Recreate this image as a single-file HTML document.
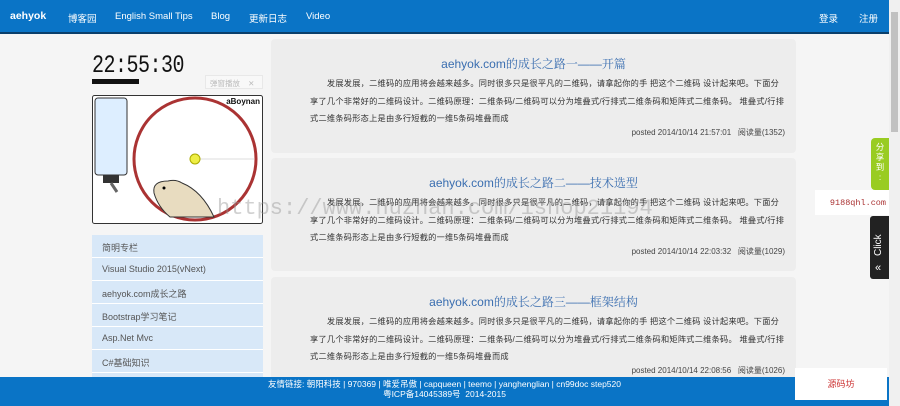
<!DOCTYPE html>
<html><head><meta charset="utf-8"><style>
*{margin:0;padding:0;box-sizing:border-box}
body{width:900px;height:406px;overflow:hidden;background:#f5f5f5;font-family:"Liberation Sans","Noto Sans CJK SC",sans-serif;position:relative}
.nav{position:absolute;left:0;top:0;width:889px;height:34px;background:#0a74c6;border-bottom:2px solid #0a3f6b;color:#fff;font-size:9.5px}
.nav span{position:absolute;top:11px}
.card{position:absolute;left:271px;width:525px;background:#ededed;border-radius:4px}
.card h3{position:absolute;top:16px;left:0;width:100%;text-align:center;font-weight:normal;font-size:12px;color:#3a6eb0;font-family:"Liberation Sans","Noto Serif CJK SC",serif}
.card p{position:absolute;left:39px;top:36px;width:490px;font-size:8.2px;letter-spacing:0.25px;line-height:17.6px;color:#333;white-space:nowrap}
.card .m{position:absolute;right:11px;top:88px;font-size:8px;color:#444}
.menu{position:absolute;left:92px;top:235px;width:171px}
.menu div{height:23px;background:#d8e8f8;border-bottom:1px solid #fff;color:#555;font-size:9px;padding:6px 0 0 10px}
.foot{position:absolute;left:0;top:377px;width:889px;height:29px;background:#0a74c6;color:#fff;font-size:8.5px;text-align:center;line-height:9.5px;padding-top:3px}
</style></head><body>
<div class="nav">
<span style="left:10px;font-weight:bold;font-size:10.5px;top:10px">aehyok</span>
<span style="left:68px">博客园</span>
<span style="left:115px">English Small Tips</span>
<span style="left:211px">Blog</span>
<span style="left:249px">更新日志</span>
<span style="left:306px">Video</span>
<span style="left:819px">登录</span>
<span style="left:859px">注册</span>
</div>
<div style="position:absolute;left:92px;top:52px;font-size:20px;font-family:'Liberation Mono',monospace;color:#111;transform:scaleY(1.25);transform-origin:0 0;letter-spacing:-0.5px">22:55:30</div>
<div style="position:absolute;left:92px;top:79px;width:47px;height:5px;background:#111"></div>
<div style="position:absolute;left:205px;top:75px;width:58px;height:14px;border:1px solid #e8e8e8;background:#f8f8f8;font-size:7.5px;color:#bbb;padding:2px 0 0 4px">弹窗播放 <span style="margin-left:6px">✕</span></div>
<svg style="position:absolute;left:92px;top:95px" width="171" height="129" viewBox="0 0 171 129">
<rect x="0.5" y="0.5" width="170" height="128" rx="2" fill="#fff" stroke="#333"/>
<rect x="3" y="3" width="32" height="77" rx="3" fill="#ddeeff" stroke="#333"/>
<rect x="11" y="80" width="16" height="8" fill="#333"/>
<line x1="19" y1="88" x2="25" y2="97" stroke="#666" stroke-width="3"/>
<circle cx="103" cy="64" r="61" fill="none" stroke="#a33" stroke-width="3"/>
<line x1="103" y1="64" x2="162" y2="64" stroke="#ddd"/>
<circle cx="103" cy="64" r="5" fill="#ee4" stroke="#aa0"/>
<path d="M62 98 Q60 86 76 86 Q84 84 90 88 Q110 96 122 122 L78 122 Q66 112 62 98Z" fill="#e8dcc0" stroke="#333"/>
<circle cx="72" cy="93" r="1.5" fill="#000"/>
<text x="168" y="9" text-anchor="end" font-size="8" font-weight="bold" fill="#111">aBoynan</text>
</svg>
<div class="menu">
<div>简明专栏</div><div>Visual Studio 2015(vNext)</div><div>aehyok.com成长之路</div><div>Bootstrap学习笔记</div><div>Asp.Net Mvc</div><div>C#基础知识</div><div></div>
</div>
<div class="card" style="top:39px;height:114px"><h3>aehyok.com的成长之路一——开篇</h3><p>&emsp;&emsp;发展发展，二维码的应用将会越来越多。同时很多只是很平凡的二维码，请拿起你的手 把这个二维码 设计起来吧。下面分<br>享了几个非常好的二维码设计。二维码原理：二维条码/二维码可以分为堆叠式/行排式二维条码和矩阵式二维条码。 堆叠式/行排<br>式二维条码形态上是由多行短截的一维5条码堆叠而成</p><div class="m">posted 2014/10/14 21:57:01 &nbsp; 阅读量(1352)</div></div>
<div class="card" style="top:158px;height:113px"><h3>aehyok.com的成长之路二——技术选型</h3><p>&emsp;&emsp;发展发展，二维码的应用将会越来越多。同时很多只是很平凡的二维码，请拿起你的手 把这个二维码 设计起来吧。下面分<br>享了几个非常好的二维码设计。二维码原理：二维条码/二维码可以分为堆叠式/行排式二维条码和矩阵式二维条码。 堆叠式/行排<br>式二维条码形态上是由多行短截的一维5条码堆叠而成</p><div class="m">posted 2014/10/14 22:03:32 &nbsp; 阅读量(1029)</div></div>
<div class="card" style="top:277px;height:110px"><h3>aehyok.com的成长之路三——框架结构</h3><p>&emsp;&emsp;发展发展，二维码的应用将会越来越多。同时很多只是很平凡的二维码，请拿起你的手 把这个二维码 设计起来吧。下面分<br>享了几个非常好的二维码设计。二维码原理：二维条码/二维码可以分为堆叠式/行排式二维条码和矩阵式二维条码。 堆叠式/行排<br>式二维条码形态上是由多行短截的一维5条码堆叠而成</p><div class="m">posted 2014/10/14 22:08:56 &nbsp; 阅读量(1026)</div></div>
<div style="position:absolute;left:217px;top:196px;font-size:22px;color:rgba(150,150,150,.45);font-family:'Liberation Mono',monospace;white-space:nowrap">https://www.huzhan.com/ishop21194</div>
<div class="foot">友情链接: 朝阳科技 | 970369 | 唯爱吊傲 | capqueen | teemo | yanghenglian | cn99doc step520<br>粤ICP备14045389号 &nbsp;2014-2015</div>
<div style="position:absolute;left:871px;top:138px;width:18px;height:52px;background:#9c2;border-radius:4px 0 0 4px;color:#fff;font-size:8.5px;text-align:center;line-height:10px;padding-top:4px">分<br>享<br>到<br>:</div>
<div style="position:absolute;left:815px;top:190px;width:74px;height:25px;background:#fff;color:#a33;font-family:'Liberation Mono',monospace;font-size:8.5px;text-align:right;padding:8px 3px 0 0">9188qhl.com</div>
<div style="position:absolute;left:870px;top:216px;width:19px;height:63px;background:#222;border-radius:3px 0 0 3px;color:#fff"><div style="position:absolute;left:3px;top:40px;transform:rotate(-90deg);transform-origin:0 0;font-size:10px">Click</div><div style="position:absolute;left:5px;top:46px;font-size:11px">«</div></div>
<div style="position:absolute;left:795px;top:368px;width:92px;height:32px;background:#fff;color:#c33;font-size:9px;text-align:center;padding-top:9px">源码坊</div>
<div style="position:absolute;left:889px;top:0;width:11px;height:406px;background:#f0f0f0"><div style="position:absolute;left:2px;top:12px;width:7px;height:120px;background:#c1c1c1"></div></div>
</body></html>
